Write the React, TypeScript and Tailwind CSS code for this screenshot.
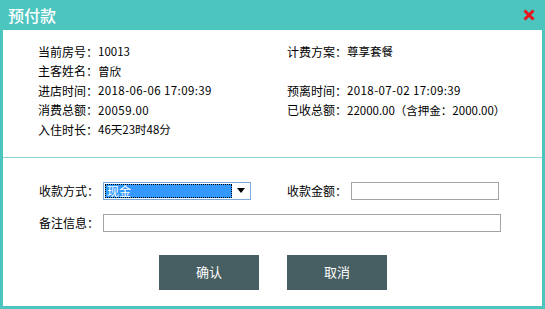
const font = { fontFamily: '"Noto Sans CJK SC", "Liberation Sans", sans-serif' };

function Row({ label, value, wide }: { label: string; value: string; wide?: boolean }) {
  return (
    <div className="flex h-[19.5px] items-center whitespace-nowrap">
      <span className="w-[60px]">{label}</span>
      <span className={wide ? "text-[11.5px] tracking-[0.4px]" : "text-[11.5px]"}>{value}</span>
    </div>
  );
}

export default function App() {
  return (
    <div
      className="flex h-[309px] w-[545px] flex-col bg-[#4dc5bf] text-[12px] text-black"
      style={font}
    >
      {/* 标题栏 */}
      <div className="flex h-[30px] items-center justify-between pl-[8px] pr-[10px]">
        <span className="text-[16px] font-medium leading-none text-white">预付款</span>
        <svg width="12" height="12" viewBox="0 0 12 12">
          <path d="M1.5 1.5 L10.5 10.5 M10.5 1.5 L1.5 10.5" stroke="#e5161d" strokeWidth="3" />
        </svg>
      </div>

      <div className="mx-[3px] mb-[3px] flex flex-1 flex-col bg-white">
        {/* 信息 */}
        <div className="grid grid-cols-[249px_1fr] pl-[35px] pt-[12px]">
          <Row label="当前房号：" value="10013" />
          <Row label="计费方案：" value="尊享套餐" />
          <Row label="主客姓名：" value="曾欣" />
          <div />
          <Row label="进店时间：" value="2018-06-06 17:09:39" wide />
          <Row label="预离时间：" value="2018-07-02 17:09:39" wide />
          <Row label="消费总额：" value="20059.00" wide />
          <Row label="已收总额：" value="22000.00（含押金：2000.00）" />
          <Row label="入住时长：" value="46天23时48分" />
        </div>

        <div className="mt-[17px] h-px bg-[#8fd2d2]" />

        {/* 表单 */}
        <div className="flex flex-col gap-[14px] pl-[36px] pt-[24px]">
          <div className="flex items-center">
            <span className="w-[64px]">收款方式：</span>
            <div className="flex h-[18px] w-[148px] items-center border border-[#7da8d8] bg-white pl-px">
              <div className="flex h-[14px] w-[127px] items-center border border-dotted border-black bg-[#3399ff] pl-[1px] leading-none text-white">
                现金
              </div>
              <div className="flex flex-1 items-center justify-center">
                <svg width="8" height="5" viewBox="0 0 8 5">
                  <path d="M0 0 H8 L4 5 Z" fill="#000" />
                </svg>
              </div>
            </div>
            <span className="ml-[36px] w-[64px]">收款金额：</span>
            <div className="h-[18px] w-[148px] border border-[#a3a3a3]" />
          </div>
          <div className="flex items-center">
            <span className="w-[64px]">备注信息：</span>
            <div className="h-[18px] w-[398px] border border-[#a3a3a3]" />
          </div>
        </div>

        <div className="mt-[23px] flex gap-[28px] pl-[156px]">
          <button className="h-[35px] w-[100px] bg-[#475e62] text-[13px] text-white">确认</button>
          <button className="h-[35px] w-[100px] bg-[#475e62] text-[13px] text-white">取消</button>
        </div>
      </div>
    </div>
  );
}
